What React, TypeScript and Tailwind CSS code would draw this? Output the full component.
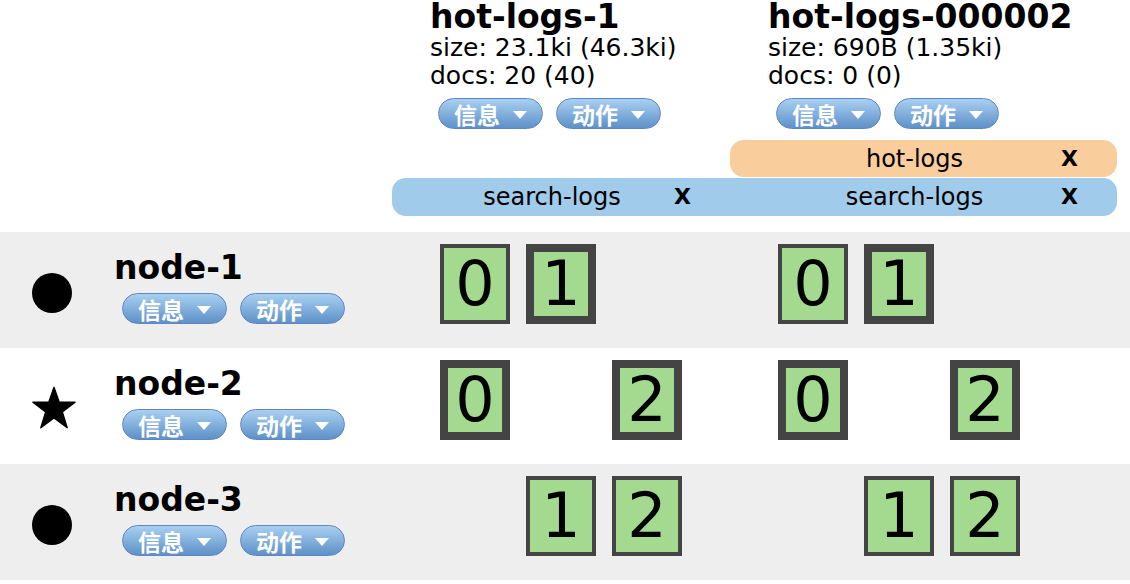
import React from "react";

const FONT = { fontFamily: '"DejaVu Sans", Verdana, sans-serif' };
const CJK = { fontFamily: '"DejaVu Sans", "Noto Sans CJK SC", sans-serif' };

function DropButton({ label }: { label: string }) {
  return (
    <div
      className="flex h-[31px] w-[105px] items-center justify-between rounded-full border border-[#5f86c4] bg-gradient-to-b from-[#a9d0f1] to-[#5e91c8] pl-[15px] pr-[15px] pt-[5px] text-[23px] font-bold leading-none text-white"
      style={CJK}
    >
      <span>{label}</span>
      <svg width="14" height="8" viewBox="0 0 14 8" className="mb-[3px]">
        <polygon points="0,0 14,0 7,8" fill="white" />
      </svg>
    </div>
  );
}

function Buttons() {
  return (
    <div className="ml-[8px] flex gap-[13px]">
      <DropButton label="信息" />
      <DropButton label="动作" />
    </div>
  );
}

function IndexHeader({ name, size, docs }: { name: string; size: string; docs: string }) {
  return (
    <div className="pl-[38px]" style={FONT}>
      <div className="text-[33px] font-bold leading-[34px] text-black">{name}</div>
      <div className="text-[25px] leading-[28px] text-black">{size}</div>
      <div className="text-[25px] leading-[28px] text-black">{docs}</div>
      <div className="mt-[8px]">
        <Buttons />
      </div>
    </div>
  );
}

function AliasCell({ name, className }: { name: string; className: string }) {
  return (
    <div className={"relative flex items-center justify-center " + className} style={FONT}>
      <span className="pr-[18px] text-[24px] leading-[30px] text-black">{name}</span>
      <span className="absolute right-[39px] top-1/2 -translate-y-1/2 text-[22px] font-bold leading-[28px] text-black">
        X
      </span>
    </div>
  );
}

type Shard = { n: number; primary: boolean } | null;

function ShardBox({ s }: { s: Shard }) {
  if (!s) return <div className="h-[80px] w-[70px]" />;
  return (
    <div
      className={
        "flex h-[80px] w-[70px] items-center justify-center border-[#444444] bg-[#a4da8f] text-[62px] leading-[62px] text-black " +
        (s.primary ? "border-[8px]" : "border-[4px]")
      }
      style={FONT}
    >
      {s.n}
    </div>
  );
}

function Shards({ list }: { list: Shard[] }) {
  return (
    <div className="flex gap-[16px] pl-[48px] pt-[12px]">
      {list.map((s, i) => (
        <ShardBox key={i} s={s} />
      ))}
    </div>
  );
}

function Star() {
  return (
    <svg width="44" height="43" viewBox="0 0 100 96">
      <polygon
        points="50,2 62,36 98,36 69,58 80,94 50,72 20,94 31,58 2,36 38,36"
        fill="black"
        strokeLinejoin="round"
        stroke="black"
        strokeWidth="3"
      />
    </svg>
  );
}

function NodeRow({
  name,
  star,
  gray,
  shards,
}: {
  name: string;
  star?: boolean;
  gray: boolean;
  shards: Shard[];
}) {
  return (
    <div className={"grid h-[116px] grid-cols-[392px_338px_387px] " + (gray ? "bg-[#eeeeee]" : "bg-white")}>
      <div className="flex pl-[32px]">
        <div className="w-[82px] shrink-0">
          {star ? (
            <div className="mt-[38px]">
              <Star />
            </div>
          ) : (
            <div className="mt-[41px] h-[40px] w-[40px] rounded-full bg-black" />
          )}
        </div>
        <div className="pt-[17px]">
          <div className="text-[33px] font-bold leading-[38px] text-black" style={FONT}>
            {name}
          </div>
          <div className="mt-[6px]">
            <Buttons />
          </div>
        </div>
      </div>
      <Shards list={shards} />
      <Shards list={shards} />
    </div>
  );
}

export default function App() {
  return (
    <div className="h-[584px] w-[1130px] overflow-hidden bg-white">
      <div className="grid grid-cols-[392px_338px_387px]">
        <div />
        <IndexHeader name="hot-logs-1" size="size: 23.1ki (46.3ki)" docs="docs: 20 (40)" />
        <IndexHeader name="hot-logs-000002" size="size: 690B (1.35ki)" docs="docs: 0 (0)" />
      </div>
      <div className="mt-[11px] grid grid-cols-[392px_338px_387px]">
        <AliasCell name="hot-logs" className="col-start-3 h-[37px] rounded-[14px] bg-[#f9cd9c]" />
      </div>
      <div className="mt-[1px] grid grid-cols-[392px_338px_387px]">
        <AliasCell name="search-logs" className="col-start-2 h-[38px] rounded-l-[14px] bg-[#a0cbea]" />
        <AliasCell name="search-logs" className="col-start-3 h-[38px] rounded-r-[14px] bg-[#a0cbea]" />
      </div>
      <div className="mt-[16px]">
        <NodeRow
          name="node-1"
          gray
          shards={[{ n: 0, primary: false }, { n: 1, primary: true }, null]}
        />
        <NodeRow
          name="node-2"
          star
          gray={false}
          shards={[{ n: 0, primary: true }, null, { n: 2, primary: true }]}
        />
        <NodeRow
          name="node-3"
          gray
          shards={[null, { n: 1, primary: false }, { n: 2, primary: false }]}
        />
      </div>
    </div>
  );
}
